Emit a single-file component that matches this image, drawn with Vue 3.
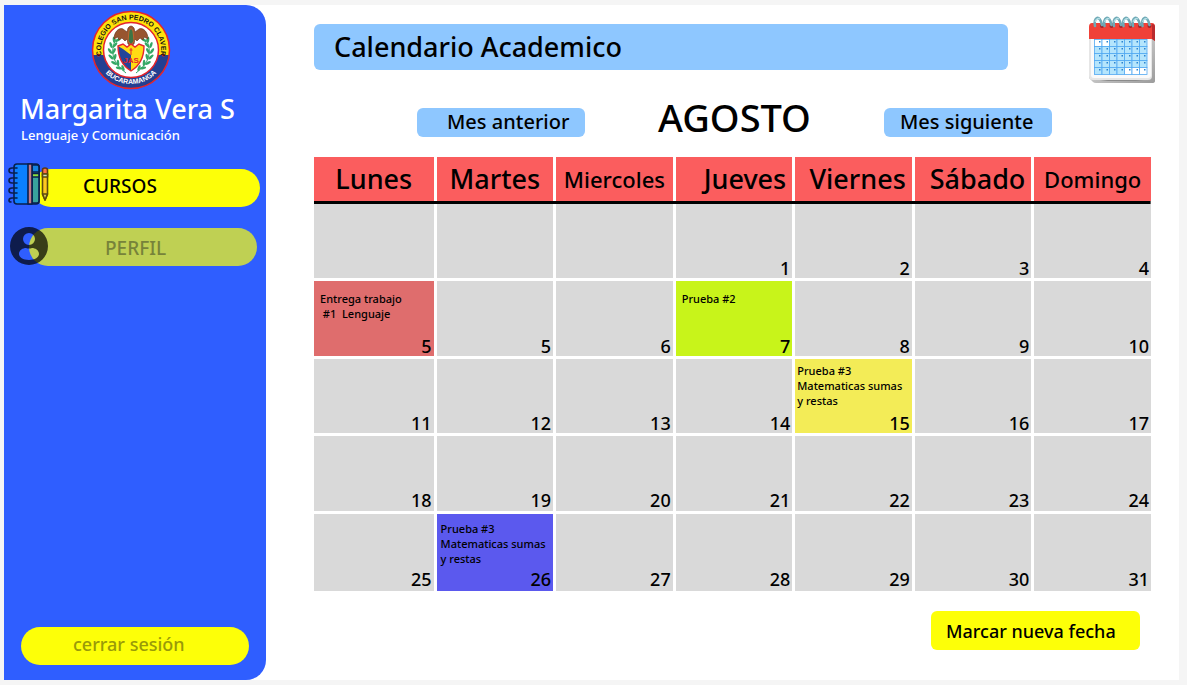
<script setup>
const days = [
  { name: 'Lunes' },
  { name: 'Martes' },
  { name: 'Miercoles', size: 'small' },
  { name: 'Jueves', size: 'end' },
  { name: 'Viernes', size: 'end' },
  { name: 'Sábado', size: 'end' },
  { name: 'Domingo', size: 'small' },
]

const exam = 'Prueba #3\nMatematicas sumas\ny restas'
const weeks = [
  [{}, {}, {}, { n: 1 }, { n: 2 }, { n: 3 }, { n: 4 }],
  [
    { n: 5, tone: 'red', note: 'Entrega trabajo\n #1  Lenguaje' },
    { n: 5 }, { n: 6 },
    { n: 7, tone: 'lime', note: 'Prueba #2' },
    { n: 8 }, { n: 9 }, { n: 10 },
  ],
  [{ n: 11 }, { n: 12 }, { n: 13 }, { n: 14 }, { n: 15, tone: 'yellow', note: exam }, { n: 16 }, { n: 17 }],
  [{ n: 18 }, { n: 19 }, { n: 20 }, { n: 21 }, { n: 22 }, { n: 23 }, { n: 24 }],
  [{ n: 25 }, { n: 26, tone: 'blue', note: exam }, { n: 27 }, { n: 28 }, { n: 29 }, { n: 30 }, { n: 31 }],
]

const leaves = [
  [31, 35, 20], [28, 40, 5], [27, 46, -8], [28, 52, -22], [31, 58, -38], [36, 63, -55],
]
const rings = [0, 1, 2, 3, 4, 5]
const gridCols = [0, 1, 2, 3, 4, 5, 6]
const gridRows = [0, 1, 2, 3, 4]
const blank = (r, c) => (r === 0 && c < 2) || (r === 4 && c > 3)
</script>

<template>
  <div class="frame">
    <aside class="sidebar">
      <svg class="crest" viewBox="6 5 80 80" role="img" aria-label="Colegio San Pedro Claver">
        <defs>
          <path id="arc-top" d="M16.500 50 A30 30 0 1 1 75.500 50" />
          <path id="arc-bottom" d="M17 64 A35.500 35.500 0 0 0 75 64" />
        </defs>
        <circle cx="46" cy="45" r="38.500" fill="#ffe20a" />
        <path d="M7.800 50 A38.500 38.500 0 0 0 84.200 50 Z" fill="#233f92" />
        <circle cx="46" cy="45" r="38.500" fill="none" stroke="#e5242c" stroke-width="1.500" />
        <circle cx="46" cy="45" r="27.500" fill="#fff" stroke="#e5242c" stroke-width="1.500" />
        <circle cx="13.500" cy="50" r="1.500" fill="#e5242c" />
        <circle cx="78.500" cy="50" r="1.500" fill="#e5242c" />
        <text class="crest-text" fill="#111"><textPath href="#arc-top" startOffset="50%" text-anchor="middle">COLEGIO SAN PEDRO CLAVER</textPath></text>
        <text class="crest-text" fill="#fff"><textPath href="#arc-bottom" startOffset="50%" text-anchor="middle">BUCARAMANGA</textPath></text>
        <g fill="#35a866">
          <path d="M31 34 Q21 53 41 68 M61 34 Q71 53 51 68" fill="none" stroke="#35a866" stroke-width="1" />
          <g v-for="(l, i) in leaves" :key="i">
            <ellipse :cx="l[0] - 2" :cy="l[1]" rx="1.300" ry="3.200" :transform="`rotate(${l[2] - 25} ${l[0] - 2} ${l[1]})`" />
            <ellipse :cx="l[0] + 2" :cy="l[1]" rx="1.300" ry="3.200" :transform="`rotate(${l[2] + 35} ${l[0] + 2} ${l[1]})`" />
            <ellipse :cx="94 - l[0]" :cy="l[1]" rx="1.300" ry="3.200" :transform="`rotate(${25 - l[2]} ${94 - l[0]} ${l[1]})`" />
            <ellipse :cx="90 - l[0]" :cy="l[1]" rx="1.300" ry="3.200" :transform="`rotate(${-35 - l[2]} ${90 - l[0]} ${l[1]})`" />
          </g>
        </g>
        <path d="M29 34 C29 27 34 22 38 24 L42 27 L43 23 Q46 19 49 23 L50 27 L54 24 C58 22 63 27 63 34 L59 32 L58 35 L55 33 L52 36 L50 34 L49 39 L46 41 L43 39 L42 34 L40 36 L37 33 L34 35 L33 32 Z" fill="#98552f" stroke="#633019" stroke-width=".6" />
        <path d="M44 26 Q46 21 48 26 L49 36 L46 40 L43 36 Z" fill="#3c7546" stroke="#c0642f" stroke-width="1" />
        <path d="M33 41 L38 39 L42 42 L46 39 L50 42 L54 39 L59 41 Q59 58 46 66 Q33 58 33 41 Z" fill="#ffdc13" />
        <path d="M33 41 L38 44 L46 66 Q33 58 33 41 Z M38 44 L46 50 V66 Z" fill="#23449b" />
        <path d="M33 41 L38 39 L42 42 L46 39 L50 42 L54 39 L59 41 Q59 58 46 66 Q33 58 33 41 Z" fill="none" stroke="#e5242c" stroke-width="1.400" />
        <path d="M46 43 V50 M44.500 45 H47.500" stroke="#e5242c" stroke-width="1" />
        <text x="46" y="58" text-anchor="middle" class="crest-mono">JAS</text>
      </svg>

      <h1>Margarita Vera S</h1>
      <p class="role">Lenguaje y Comunicación</p>

      <nav class="menu">
        <a href="#cursos" class="item courses">
          CURSOS
          <svg class="item-icon books" viewBox="0 0 42 44" aria-hidden="true">
            <g stroke="#081f4d" stroke-width="1.600" stroke-linejoin="round" stroke-linecap="round">
              <rect x="6" y="2" width="25" height="40" rx="3" fill="#0b80ff" />
              <path d="M24 3 H29 Q31 3 31 5 V39 Q31 41 29 41 H24 Z" fill="#39a39d" />
              <path d="M24 3 H29 Q31 3 31 5 V10 H24 Z" fill="#1383e0" />
              <path d="M24 11.500 H31 V15 H24 Z" fill="#8ade40" />
              <rect x="20" y="2" width="4" height="40" fill="#c37a87" />
              <path d="M9 6 H4 Q1 6 1 8.500 Q1 11 4 11 H9 M9 16 H4 Q1 16 1 18.500 Q1 21 4 21 H9 M9 26 H4 Q1 26 1 28.500 Q1 31 4 31 H9 M9 36 H4 Q1 36 1 38.500 Q1 40 3 40" fill="none" />
              <path d="M34.500 12 H39.500 V32 L37 38 L34.500 32 Z" fill="#ffc91f" stroke="#5c4a10" />
              <path d="M34.500 12 V8 Q34.500 6 37 6 Q39.500 6 39.500 8 V12 Z" fill="#ff7044" stroke="#5c3a10" />
              <path d="M34.500 12 H39.500 V15 H34.500 Z" fill="#c9e3bd" stroke="#5c4a10" />
              <path d="M34.500 32 H39.500 L37 38 Z" fill="#d8c84c" stroke="#5c4a10" />
            </g>
          </svg>
        </a>
        <a href="#perfil" class="item profile">
          PERFIL
          <svg class="item-icon person" viewBox="0 0 38 38" aria-hidden="true">
            <path fill-rule="evenodd" fill="#000" fill-opacity=".7" d="M19 0 A19 19 0 1 1 19 38 A19 19 0 1 1 19 0 Z M19 6 A6 6 0 1 0 19 18 A6 6 0 1 0 19 6 Z M19 33 C25 33 29 30 29 27 C29 23 25 21 22 21 Q19 22 16 21 C13 21 9 23 9 27 C9 30 13 33 19 33 Z" />
          </svg>
        </a>
      </nav>

      <button type="button" class="logout">cerrar sesión</button>
    </aside>

    <main class="main">
      <header class="top">
        <h2 class="title">Calendario Academico</h2>
        <svg class="calendar-icon" viewBox="0 0 68 68" aria-hidden="true">
          <defs>
            <linearGradient id="paper-edge" x1="0" y1="0" x2="1" y2="1">
              <stop offset="0" stop-color="#e8e8e8" />
              <stop offset="1" stop-color="#9c9c9c" />
            </linearGradient>
          </defs>
          <path d="M1 20 H67 V66 Q67 68 64 68 H8 Q6 68 5 67 L1 63 Z" fill="url(#paper-edge)" />
          <path d="M1 20 H64 V61 Q64 65 60 65 H5 Q1 65 1 61 Z" fill="#e6e6e6" />
          <path d="M3 21 H63 V60 Q63 63 60 63 H6 Q3 63 3 60 Z" fill="#fafafa" />
          <path d="M12 65 H56 L48 66 H20 Z" fill="#8b8b8b" />
          <path d="M1 12 Q1 8 4 8 H64 Q67 8 67 12 V26 L64 24 H1 Z" fill="#f04138" />
          <path d="M64 9 Q67 9 67 12 V26 L64 24 Z" fill="#b92b2e" />
          <g v-for="i in rings" :key="i">
            <circle :cx="14 + i * 9.500" cy="11" r="2" fill="#9b2830" />
            <path :d="`M${7 + i * 9.500} 11 C${5 + i * 9.500} 2 ${12 + i * 9.500} -1 ${14 + i * 9.500} 10`" fill="none" stroke="#6fa9b6" stroke-width="2.600" stroke-linecap="round" />
            <path :d="`M${7 + i * 9.500} 7 Q${9 + i * 9.500} 2 ${12 + i * 9.500} 4`" fill="none" stroke="#b5e0e6" stroke-width="1.200" />
          </g>
          <g v-for="r in gridRows" :key="r">
            <g v-for="c in gridCols" :key="c">
              <rect :x="6.500 + c * 7.500" :y="24.500 + r * 7" width="7.500" height="7" :fill="blank(r, c) ? '#fff' : '#b5e5fc'" stroke="#51a9f2" stroke-width=".8" />
              <rect :x="11 + c * 7.500" :y="26 + r * 7" width="1.500" height="1.500" fill="#2b83cf" />
            </g>
          </g>
        </svg>
      </header>

      <div class="month">
        <button type="button" class="step prev">Mes anterior</button>
        <h2 class="month-name">AGOSTO</h2>
        <button type="button" class="step next">Mes siguiente</button>
      </div>

      <table class="calendar">
        <thead>
          <tr>
            <th v-for="d in days" :key="d.name" scope="col" :class="d.size">{{ d.name }}</th>
          </tr>
        </thead>
        <tbody>
          <tr v-for="(week, w) in weeks" :key="w">
            <td v-for="(day, i) in week" :key="i" :class="day.tone">
              <div class="cell">
                <p v-if="day.note" class="note">{{ day.note }}</p>
                <span v-if="day.n" class="num">{{ day.n }}</span>
              </div>
            </td>
          </tr>
        </tbody>
      </table>

      <button type="button" class="mark">Marcar nueva fecha</button>
    </main>
  </div>
</template>

<style>
body {
  background: #f5f5f5;
}
</style>

<style scoped>
.frame {
  display: flex;
  box-sizing: border-box;
  min-height: calc(100vh - 10px);
  margin: 5px 8px 5px 4px;
  background: #fff;
  color: #000;
  font-family: "Noto Sans", "Open Sans", sans-serif;
  font-weight: 500;
}
h1, h2, p {
  margin: 0;
  font-weight: 500;
}
button {
  border: 0;
  font: inherit;
  color: inherit;
  text-align: left;
  white-space: nowrap;
  cursor: pointer;
}
.sidebar {
  display: flex;
  flex-direction: column;
  box-sizing: border-box;
  flex: 0 0 262px;
  padding: 5px 6px 15px 16px;
  background: #2f5eff;
  border-radius: 0 20px 20px 0;
  color: #fff;
}
.crest {
  width: 80px;
  height: 80px;
  margin-left: 71px;
}
.crest-text {
  font: bold 7px "Liberation Sans", sans-serif;
}
.crest-mono {
  font: bold 8px "Liberation Sans", sans-serif;
  fill: #e5242c;
}
h1 {
  font-size: 27px;
  line-height: 37px;
  white-space: nowrap;
}
.role {
  padding-left: 1px;
  font-size: 13px;
  line-height: 16px;
}
.menu {
  display: flex;
  flex-direction: column;
  gap: 21px;
  margin-top: 26px;
}
.item {
  position: relative;
  height: 38px;
  border-radius: 19px;
  font-size: 19px;
  line-height: 34px;
  text-decoration: none;
}
.courses {
  margin-left: 12px;
  padding-left: 51px;
  background: #fdff08;
  color: #000;
}
.profile {
  margin: 0 3px 0 9px;
  padding-left: 76px;
  background: #bfd053;
  color: #77833a;
  line-height: 40px;
}
.item-icon {
  position: absolute;
}
.books {
  left: -24px;
  top: -7px;
  width: 42px;
  height: 44px;
}
.person {
  left: -19px;
  top: -1px;
  width: 38px;
  height: 38px;
}
.logout {
  height: 38px;
  margin: auto 11px 0 1px;
  padding: 0 0 4px 52px;
  border-radius: 19px;
  background: #fdff08;
  color: #999a08;
  font-size: 18px;
}
.main {
  display: flex;
  flex-direction: column;
  flex: 1;
  min-width: 0;
  padding: 10px 28px 16px 48px;
}
.top {
  display: flex;
  align-items: center;
  gap: 80px;
  margin-right: -5px;
}
.title {
  flex: 1;
  margin-bottom: 5px;
  padding-left: 20px;
  border-radius: 6px;
  background: #8ec7ff;
  font-size: 27px;
  line-height: 46px;
}
.calendar-icon {
  width: 68px;
  height: 68px;
}
.month {
  display: flex;
  align-items: center;
  justify-content: space-between;
  box-sizing: border-box;
  height: 74px;
  padding: 4px 99px 0 103px;
}
.month-name {
  margin-bottom: 10px;
  font-size: 38px;
  line-height: 40px;
}
.step {
  width: 168px;
  height: 29px;
  padding: 0 0 0 30px;
  border-radius: 6px;
  background: #8ec7ff;
  font-size: 20px;
  line-height: 28px;
}
.next {
  padding-left: 16px;
}
.calendar {
  width: 100%;
  height: 434px;
  table-layout: fixed;
  border-spacing: 0;
}
thead {
  background: linear-gradient(#000, #000) bottom / 100% 3px no-repeat;
}
th, td {
  padding: 0;
  border-left: 3px solid transparent;
  background-clip: padding-box;
}
th:first-child, td:first-child {
  border-left: 0;
}
th {
  height: 44px;
  border-bottom: 3px solid transparent;
  background-color: #fb5d5e;
  font-size: 27px;
  font-weight: 500;
  line-height: 44px;
}
.small {
  font-size: 22px;
}
.end {
  padding-right: 6px;
  text-align: right;
}
td {
  border-bottom: 3px solid transparent;
  background-color: #d9d9d9;
}
tr:last-child td {
  border-bottom: 0;
}
.cell {
  display: flex;
  flex-direction: column;
  box-sizing: border-box;
  height: 74px;
  padding: 4px 2px 0;
}
tr:last-child .cell {
  height: 77px;
  padding-bottom: 2px;
}
.num {
  margin: auto 0 0 auto;
  font-size: 18px;
  line-height: 20px;
}
.note {
  font-size: 11px;
  line-height: 15px;
  white-space: pre;
}
.red .cell, .lime .cell {
  padding-top: 9px;
}
.red .note, .lime .note {
  padding-left: 4px;
}
.blue .cell {
  padding-top: 7px;
  padding-left: 4px;
}
.red {
  background-color: #df6d6d;
}
.lime {
  background-color: #c8f41a;
}
.yellow {
  background-color: #f3ec57;
}
.blue {
  background-color: #5b59ee;
}
.mark {
  align-self: flex-end;
  width: 209px;
  height: 39px;
  margin: 20px 11px 0 0;
  padding: 0 0 0 15px;
  border-radius: 6px;
  background: #fdff08;
  font-size: 18px;
}
</style>
